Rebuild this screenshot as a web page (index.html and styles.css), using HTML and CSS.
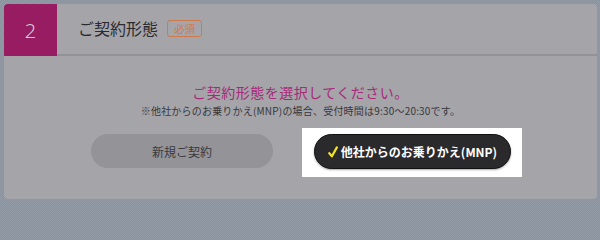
FILE: index.html
```html
<!DOCTYPE html>
<html lang="ja">
<head>
<meta charset="utf-8">
<title>ご契約形態</title>
<link rel="stylesheet" href="styles.css">
</head>
<body>
<section class="card">
  <header class="card-head">
    <div class="step">2</div>
    <h2 class="head-title">ご契約形態</h2>
    <span class="badge">必須</span>
  </header>
  <div class="card-body">
    <p class="prompt">ご契約形態を選択してください。</p>
    <p class="note">※他社からのお乗りかえ(MNP)の場合、受付時間は9:30〜20:30です。</p>
    <div class="choices">
      <button class="choice">新規ご契約</button>
      <div class="spot">
        <button class="choice selected"><svg class="check" viewBox="0 0 10 12" width="10" height="12" aria-hidden="true"><path d="M1.3 7.2 L3.9 10.3 L8.9 1.4" fill="none" stroke="#f6e41c" stroke-width="2.2" stroke-linecap="round" stroke-linejoin="round"/></svg>他社からのお乗りかえ(MNP)</button>
      </div>
    </div>
  </div>
</section>
</body>
</html>
```
FILE: styles.css
```css
html, body {
  margin: 0;
  padding: 0;
}
body {
  width: 600px;
  height: 203px;
  background-color: #8e96a2;
  background-image: repeating-conic-gradient(#8a929e 0 25%, #939ba6 0 50%);
  background-size: 2px 2px;
  font-family: "Noto Sans CJK JP", "Noto Sans", sans-serif;
  overflow: hidden;
  padding: 4px 0 0 4px;
  box-sizing: border-box;
}
.card {
  width: 593px;
  height: 195px;
  background: #a5a4a9;
  border-radius: 4px;
  overflow: hidden;
  display: flex;
  flex-direction: column;
}
.card-head {
  height: 50px;
  border-bottom: 2px solid #939297;
  display: flex;
  align-items: center;
  flex-shrink: 0;
}
.step {
  width: 53px;
  height: 52px;
  margin-bottom: -2px;
  align-self: flex-start;
  background: #981c62;
  color: #d6ccd6;
  font-family: "Noto Sans", sans-serif;
  font-weight: 300;
  font-size: 20px;
  display: flex;
  align-items: center;
  justify-content: center;
}
.head-title {
  margin: 0 0 0 21px;
  font-size: 16px;
  font-weight: 400;
  color: #2b2b2f;
  line-height: 20px;
  position: relative;
  top: -1px;
}
.badge {
  margin-left: 9px;
  height: 15px;
  padding: 0 6px;
  border: 1.5px solid #cf7a4c;
  border-radius: 3px;
  color: #cf7a4c;
  font-size: 10.5px;
  line-height: 15px;
  position: relative;
  top: -1px;
}
.card-body {
  display: flex;
  flex-direction: column;
  align-items: center;
  padding-top: 27px;
}
.prompt {
  margin: 0;
  font-size: 14px;
  letter-spacing: 0.5px;
  line-height: 18px;
  color: #a8287a;
}
.note {
  margin: 3px 0 0;
  font-size: 10px;
  line-height: 14px;
  color: #38383c;
  letter-spacing: 0.2px;
}
.choices {
  margin: 10px 0 0 12px;
  display: flex;
  align-items: flex-start;
  gap: 29px;
}
.choice {
  font-family: "Noto Sans CJK JP", "Noto Sans", sans-serif;
  border: none;
  border-radius: 17px;
  height: 34px;
  width: 182px;
  margin-top: 6px;
  background: #939398;
  color: #3a3a3e;
  font-size: 12px;
  padding: 0;
}
.spot {
  background: #ffffff;
  padding: 6px 11px 8px 12px;
}
.choice.selected {
  margin-top: 0;
  width: 197px;
  height: 35px;
  border-radius: 18px;
  background: #2a2a2c;
  border: 1px solid #111;
  box-shadow: 0 1px 2px rgba(0,0,0,0.35);
  color: #ffffff;
  font-weight: 700;
  font-size: 12px;
  display: flex;
  align-items: center;
  justify-content: center;
  box-sizing: border-box;
}
.check {
  margin-right: 3px;
  flex-shrink: 0;
}
```
